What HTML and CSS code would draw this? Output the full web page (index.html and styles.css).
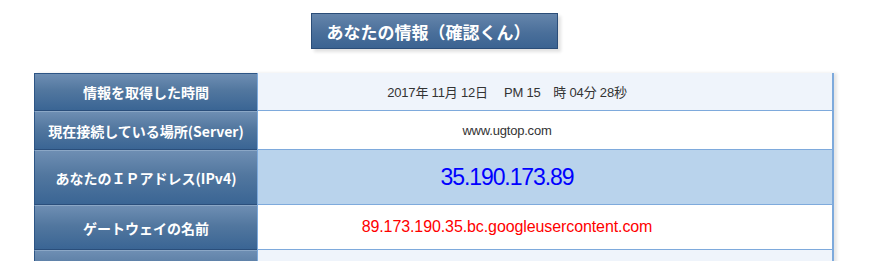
FILE: index.html
```html
<!DOCTYPE html>
<html lang="ja">
<head>
<meta charset="utf-8">
<title>あなたの情報（確認くん）</title>
<link rel="stylesheet" href="styles.css">
</head>
<body>
<div class="page">
  <h1 class="title">あなたの情報（確認くん）</h1>
  <table class="info">
    <tbody>
      <tr class="row-time">
        <th>情報を取得した時間</th>
        <td class="alt">2017年 11月 12日　 PM 15　時 04分 28秒</td>
      </tr>
      <tr class="row-server">
        <th>現在接続している場所(Server)</th>
        <td>www.ugtop.com</td>
      </tr>
      <tr class="row-ip">
        <th>あなたのＩＰアドレス(IPv4)</th>
        <td class="ip"><span class="ip-value">35.190.173.89</span></td>
      </tr>
      <tr class="row-gateway">
        <th>ゲートウェイの名前</th>
        <td class="gateway">89.173.190.35.bc.googleusercontent.com</td>
      </tr>
      <tr class="row-next">
        <th></th>
        <td class="alt"></td>
      </tr>
    </tbody>
  </table>
</div>
</body>
</html>
```
FILE: styles.css
```css
html, body {
  margin: 0;
  padding: 0;
  background: #ffffff;
}

.page {
  width: 868px;
  display: flex;
  flex-direction: column;
  align-items: center;
  padding-top: 13px;
}

/* Heading plate */
.title {
  margin: 0;
  box-sizing: border-box;
  width: 247px;
  height: 36px;
  padding-left: 15px;
  display: flex;
  align-items: center;
  background: linear-gradient(to bottom, #6585ab 0%, #4a6f9a 55%, #3b6392 100%);
  border: 1px solid #2b4d78;
  box-shadow: 3px 3px 3px #e2e2e2;
  color: #ffffff;
  font-family: "Noto Sans CJK JP", sans-serif;
  font-weight: 700;
  font-size: 17px;
  line-height: 1;
}

/* Info table */
.info {
  margin-top: 24px;
  width: 800px;
  table-layout: fixed;
  border-collapse: separate;
  border-spacing: 0;
  box-shadow: 3px 0 3px #e6e6e6;
}

.info th {
  width: 223px;
  box-sizing: border-box;
  padding: 0;
  background: linear-gradient(to bottom, #6e8eb3 0%, #52779f 45%, #3a6594 100%);
  border-left: 1px solid #2d5585;
  border-top: 1px solid #8ba7c6;
  border-bottom: 1px solid #2a4e7b;
  color: #ffffff;
  font-family: "Noto Sans CJK JP", sans-serif;
  font-weight: 700;
  font-size: 14px;
  text-align: center;
  vertical-align: middle;
}

.info tr:first-child th {
  border-top-color: #2d5585;
}

.info td {
  padding: 0 76px 0 0;
  background: #ffffff;
  border-left: 1px solid #7eaadc;
  border-right: 2px solid #7eaadc;
  border-bottom: 1px solid #7eaadc;
  color: #333333;
  font-family: "Liberation Sans", "Noto Sans CJK JP", sans-serif;
  font-size: 13px;
  letter-spacing: -0.2px;
  text-align: center;
  vertical-align: middle;
}

.info td.alt {
  background: #eff4fb;
}

.row-time { height: 38px; }
.row-server { height: 39px; }
.row-ip { height: 55px; }
.row-gateway { height: 45px; }
.row-next { height: 45px; }

.info td.ip {
  background: #b9d3ec;
}

.ip-value {
  color: #0000ff;
  font-size: 23px;
  letter-spacing: -1.1px;
}

.info td.gateway {
  color: #ff0000;
  font-size: 16px;
  letter-spacing: -0.1px;
}
```
